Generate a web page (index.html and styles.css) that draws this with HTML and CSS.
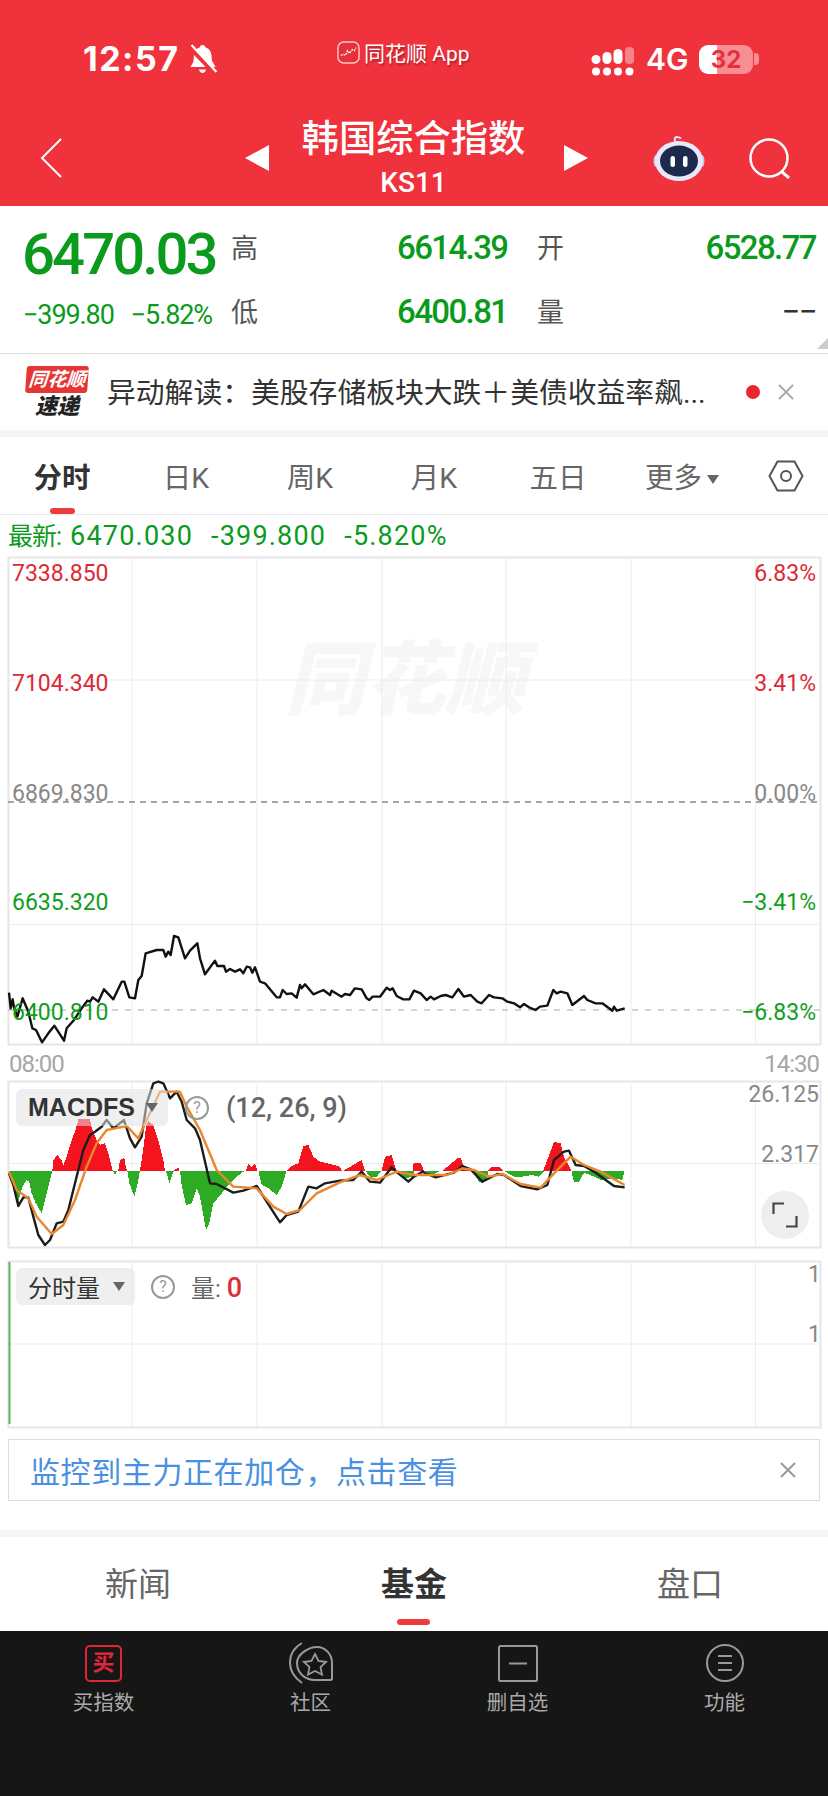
FILE: index.html
```html
<!DOCTYPE html>
<html lang="zh-CN">
<head>
    <meta charset="UTF-8">
    <meta name="viewport" content="width=device-width, initial-scale=1.0">
    <title>韩国综合指数</title>
    <link rel="stylesheet" href="styles.css">
</head>
<body>
    <header class="header">
        <div class="status">
            <span class="clock">12:57</span>
            <svg class="bell" viewBox="0 0 29 30">
                <path d="M14 1c1.8 0 2.8 1.2 3 2.6 3.8 1 5.8 4 6 8l.4 5 3.600 6.400H2l3-5.400.4-6c.2-4 2.400-7 5.800-8C11.400 2.200 12.400 1 14 1z" fill="#fff"/>
                <path d="M10.500 25.500h7c-.5 2-1.800 3.500-3.500 3.500s-3-1.500-3.500-3.500z" fill="#fff"/>
                <path d="M1 3l25 26" stroke="#f0323c" stroke-width="4.500"/>
                <path d="M3 1l25 27" stroke="#fff" stroke-width="2.200"/>
            </svg>
            <span class="app-tag">
                <svg class="app-logo" viewBox="0 0 24 24">
                    <rect x="1" y="1" width="22" height="22" rx="6" fill="#e8303a" stroke="#ffc9cc" stroke-width="1.500"/>
                    <path d="M4 15l3-1 2 1 2-5 2 3 3-4 2 1 2-3" fill="none" stroke="#fff" stroke-width="1.300" stroke-dasharray="2 1"/>
                </svg>
                同花顺 App
            </span>
            <svg class="signal" viewBox="0 0 44 30">
                <rect x="0.500" y="8" width="9" height="9" rx="4.500" fill="#fff"/>
                <rect x="11.500" y="5" width="9" height="12" rx="4.500" fill="#fff"/>
                <rect x="22.500" y="2" width="9" height="15" rx="4.500" fill="#fff"/>
                <rect x="34" y="0" width="9" height="17" rx="4" fill="#fff" opacity=".4"/>
                <circle cx="5" cy="24.500" r="4" fill="#fff"/>
                <circle cx="16" cy="24.500" r="4" fill="#fff"/>
                <circle cx="27" cy="24.500" r="4" fill="#fff"/>
                <circle cx="38.500" cy="24.500" r="4" fill="#fff"/>
            </svg>
            <span class="net">4G</span>
            <span class="battery">32</span>
            <span class="battery-nub"></span>
        </div>
        <nav class="nav">
            <svg class="nav-back" viewBox="0 0 22 40"><path d="M21 1L2 20l19 19" fill="none" stroke="#fff" stroke-width="2"/></svg>
            <span class="tri tri-left"></span>
            <div class="nav-title">
                <div class="nav-name">韩国综合指数</div>
                <div class="nav-code">KS11</div>
            </div>
            <span class="tri tri-right"></span>
            <svg class="robot" viewBox="0 0 52 46">
                <path d="M25 8c-3-1-4-3-3-5 1-1.500 4-1 6 .5" fill="none" stroke="#e9e6fb" stroke-width="2"/>
                <ellipse cx="3" cy="26" rx="2.500" ry="6" fill="#c9c6f2"/>
                <ellipse cx="49" cy="26" rx="2.500" ry="6" fill="#c9c6f2"/>
                <ellipse cx="26" cy="26" rx="24" ry="20" fill="#e9e8fb"/>
                <ellipse cx="26" cy="26" rx="19" ry="15.500" fill="#1d2a4d"/>
                <rect x="17.500" y="21" width="4.500" height="11" rx="2.200" fill="#fff"/>
                <rect x="30" y="21" width="4.500" height="11" rx="2.200" fill="#fff"/>
            </svg>
            <svg class="search" viewBox="0 0 42 41">
                <circle cx="20" cy="20" r="18.500" fill="none" stroke="#fff" stroke-width="2.500"/>
                <path d="M32 33l8 7" stroke="#fff" stroke-width="3"/>
            </svg>
        </nav>
    </header>

    <section class="quote">
        <div class="price">6470.03</div>
        <div class="quote-label">高</div>
        <div class="quote-value">6614.39</div>
        <div class="quote-label">开</div>
        <div class="quote-value quote-right">6528.77</div>
        <div class="change"><span>−399.80</span><span>−5.82%</span></div>
        <div class="quote-label">低</div>
        <div class="quote-value">6400.81</div>
        <div class="quote-label">量</div>
        <div class="quote-value quote-right quote-empty">−−</div>
        <span class="quote-corner"></span>
    </section>

    <section class="ticker">
        <div class="ticker-logo">
            <div class="ticker-flag">同花顺</div>
            <div class="ticker-sub">速递</div>
        </div>
        <div class="ticker-text">异动解读&#xFF1A;美股存储板块大跌&#xFF0B;美债收益率飙...</div>
        <span class="ticker-dot"></span>
        <svg class="close close-ticker" viewBox="0 0 18 16"><path d="M2 1l14 14M16 1L2 15" stroke="#aaa" stroke-width="2"/></svg>
    </section>

    <section class="periods">
        <div class="period period-active">分时</div>
        <div class="period">日K</div>
        <div class="period">周K</div>
        <div class="period">月K</div>
        <div class="period">五日</div>
        <div class="period">更多<span class="period-arrow"></span></div>
        <svg class="hex" viewBox="0 0 36 32">
            <path d="M9.500 1.500h17L34.500 16l-8 14.500h-17L1.500 16z" fill="none" stroke="#555" stroke-width="2"/>
            <circle cx="18" cy="16" r="5" fill="none" stroke="#555" stroke-width="2"/>
        </svg>
    </section>

    <div class="latest">
        <span class="latest-label">最新:</span>
        <span>6470.030</span>
        <span>-399.800</span>
        <span>-5.820%</span>
    </div>

    <!-- main chart, viewBox is in page coordinates -->
    <div class="chart chart-main">
        <svg viewBox="0 557 828 489" width="828" height="489">
            <text class="watermark" x="405" y="708" text-anchor="middle">同花顺</text>
            <path class="frame" d="M8.500 557.500h812v487H8.500z"/>
            <path class="grid" d="M132 557v487M257 557v487M382 557v487M506 557v487M631 557v487M755.500 557v487M8 680h812M8 924.500h812"/>
            <path class="mid-line" d="M8 802h812"/>
            <path class="low-line" d="M8 1010h812"/>
            <g transform="translate(0 880) scale(.33333)">
                <polyline class="line line-price" points="27,338 32,385 38,358 42,382 52,410 68,355 85,395 97,445 108,450 126,487 145,460 163,437 192,482 200,445 222,420 245,385 262,362 270,365 278,352 295,365 312,328 340,358 365,305 373,305 388,352 405,355 415,300 425,288 437,220 470,210 490,210 497,230 505,215 512,225 522,168 535,172 555,235 570,212 592,190 600,235 615,283 645,242 652,258 672,258 678,275 690,267 705,275 720,268 730,280 740,260 750,262 757,278 765,262 780,305 795,310 830,352 840,352 848,330 860,342 875,340 890,353 900,315 905,325 915,313 940,343 970,330 990,345 995,332 1025,350 1035,342 1050,345 1065,325 1085,328 1100,355 1108,360 1118,350 1140,350 1160,323 1170,330 1178,325 1190,348 1210,358 1228,358 1242,332 1262,340 1280,360 1292,350 1302,358 1322,348 1337,345 1357,352 1375,327 1392,350 1412,345 1432,365 1445,370 1467,345 1482,352 1507,355 1522,365 1542,370 1560,382 1572,372 1587,382 1607,390 1620,380 1642,377 1660,330 1670,340 1682,335 1702,340 1717,375 1752,348 1762,360 1787,370 1807,370 1837,392 1842,380 1850,392 1874,385"/>
            </g>
            <text class="axis axis-up" x="12" y="581">7338.850</text>
            <text class="axis axis-up" x="12" y="691">7104.340</text>
            <text class="axis axis-flat" x="12" y="801">6869.830</text>
            <text class="axis axis-down" x="12" y="910">6635.320</text>
            <text class="axis axis-down" x="12" y="1020">6400.810</text>
            <text class="axis axis-up" x="816" y="581" text-anchor="end">6.83%</text>
            <text class="axis axis-up" x="816" y="691" text-anchor="end">3.41%</text>
            <text class="axis axis-flat" x="816" y="801" text-anchor="end">0.00%</text>
            <text class="axis axis-down" x="816" y="910" text-anchor="end">−3.41%</text>
            <text class="axis axis-down" x="816" y="1020" text-anchor="end">−6.83%</text>
        </svg>
    </div>

    <div class="time-axis">
        <span>08:00</span>
        <span>14:30</span>
    </div>

    <!-- macd -->
    <div class="chart chart-macd">
        <svg viewBox="0 1081 828 167" width="828" height="167">
            <path class="frame" d="M8.500 1081.500h812v166H8.500z"/>
            <path class="grid" d="M132 1081v166M257 1081v166M382 1081v166M506 1081v166M631 1081v166M755.500 1081v166M8 1163.500h812"/>
            <g transform="translate(0 1060) scale(.33333)">
                <path class="bars bars-down" d="M27 332L30 350 40 385 48 420 55 442 60 400 70 375 80 360 88 365 95 400 105 425 125 460 135 420 145 380 157 332zM338 332l7 13 7-13zM382 332l6 38 15 40 9-35 8-43zM498 332l10 38 10-30 4-8zM540 332l5 43 13 60 17-5 15-45 10 25 18 100 10-20 12-60 25-30 25-30 20-20 25-18zM775 332l10 43 20 10 25 20 15-25 15-48zM1095 332l15 18h20l15-18zM1195 332l20 23 27-5v-18zM1272 332l25 13 25-13zM1417 332l20 33 10 5 17-20v-18zM1510 332l32 18 25 0 30-5 20 5 16-18zM1714 332l8 33 15 0 15-27 30 12 20 10 40-5 25 5 7-28z"/>
                <path class="bars bars-up" d="M157 332l3-32 12-15 13 15 5 15 10-25 12-40 16-45 7-27h35l5 27 15 35 10 15 15-5 10 30 10 40 3 12zM355 332l5-32 13-7 5 32 4 7zM420 332l8-52 10-80 7-17 15 12 15 45 15 60 5 32zM520 332l15-10 3 10zM738 332l7-20 10 8 10-8 7 20zM862 332l13-14 20-8 15-52 15-3 15 35 20 15 30 7 30 8 5 12zM1030 332l30-17 25-15 10 32zM1145 332l10-42 20-5 10 35 5 12zM1240 332v-20l2-2h20l10 22zM1327 332l15-12 30-25h10l10 25 25 12zM1464 332l13-12h20l13 12zM1630 332l27-72 5-15 20 5 10 40 22 42z"/>
                <polyline class="line line-diff" points="27,340 40,375 55,438 70,412 85,412 100,470 115,525 135,555 150,540 170,490 190,485 205,450 225,370 250,270 270,225 285,215 305,200 320,180 340,205 372,180 390,235 405,262 425,230 440,130 460,70 475,65 490,70 510,115 530,95 545,125 560,180 585,205 600,240 630,370 650,372 700,398 730,392 770,378 800,425 840,487 860,465 895,455 925,380 950,385 975,370 1020,362 1060,360 1085,335 1110,365 1140,368 1175,322 1195,340 1225,365 1242,350 1267,335 1307,352 1362,338 1387,318 1412,328 1447,365 1492,342 1512,345 1562,378 1612,388 1642,375 1662,300 1692,275 1707,272 1727,315 1752,318 1787,338 1842,378 1874,382"/>
                <polyline class="line line-dea" points="27,335 50,390 85,415 110,470 155,522 190,495 225,420 260,320 290,250 320,210 345,205 380,198 415,235 440,180 480,95 510,95 540,95 560,140 600,210 650,330 700,380 770,385 820,440 860,462 900,450 950,400 1020,367 1080,345 1130,360 1190,335 1242,345 1282,345 1342,345 1387,325 1422,330 1467,350 1507,342 1562,372 1622,383 1662,340 1712,290 1752,315 1802,335 1874,375"/>
            </g>
            <text class="axis axis-gray" x="819" y="1102" text-anchor="end">26.125</text>
            <text class="axis axis-gray" x="819" y="1162" text-anchor="end">2.317</text>
        </svg>
        <div class="indicator indicator-macd">
            <div class="indicator-pill">MACDFS<span class="pill-arrow"></span></div>
            <span class="help">?</span>
            <span class="indicator-args">(12, 26, 9)</span>
        </div>
        <div class="fullscreen">
            <svg viewBox="0 0 26 26" width="26" height="26"><path d="M1.500 12V1.500H12M24.500 14v10.500H14" fill="none" stroke="#444" stroke-width="2.200"/></svg>
        </div>
    </div>

    <!-- volume -->
    <div class="chart chart-volume">
        <svg viewBox="0 1261 828 167" width="828" height="167">
            <path class="frame" d="M8.500 1261.500h812v166H8.500z"/>
            <path class="grid" d="M132 1261v166M257 1261v166M382 1261v166M506 1261v166M631 1261v166M755.500 1261v166M8 1344h812"/>
            <path class="vol-bar" d="M9.500 1262v162"/>
            <text class="axis axis-gray" x="821" y="1282" text-anchor="end">1</text>
            <text class="axis axis-gray" x="821" y="1342" text-anchor="end">1</text>
        </svg>
        <div class="indicator indicator-volume">
            <div class="indicator-pill pill-volume">分时量<span class="pill-arrow"></span></div>
            <span class="help">?</span>
            <span class="indicator-args">量: <b class="vol-zero">0</b></span>
        </div>
    </div>

    <div class="notice">
        <span class="notice-text">监控到主力正在加仓&#xFF0C;点击查看</span>
        <svg class="close close-notice" viewBox="0 0 16 16"><path d="M1 1l14 14M15 1L1 15" stroke="#999" stroke-width="2"/></svg>
    </div>

    <section class="lower-tabs">
        <div class="lower-tab">新闻</div>
        <div class="lower-tab lower-tab-active">基金</div>
        <div class="lower-tab">盘口</div>
    </section>

    <footer class="toolbar">
        <div class="tool">
            <div class="tool-icon"><span class="buy-icon">买</span></div>
            <div class="tool-label">买指数</div>
        </div>
        <div class="tool">
            <div class="tool-icon">
                <svg viewBox="0 0 44 42" width="44" height="42" fill="none" stroke="#999" stroke-width="2">
                    <path d="M13 1C6 5 1 12 1 21s5 15 12 20" />
                    <path d="M43 37V21c0-9-7-16-15-16S8 12 8 21c0 10 8 17 18 17h14c2 0 3-.5 3-1z"/>
                    <path d="M26 12l3.500 7 7.500 1-5.500 5 1.500 7.500-7-3.500-7 3.500 1.500-7.500-5.500-5 7.500-1z" stroke-width="1.800"/>
                </svg>
            </div>
            <div class="tool-label">社区</div>
        </div>
        <div class="tool">
            <div class="tool-icon">
                <svg viewBox="0 0 40 37" width="40" height="37" fill="none" stroke="#999" stroke-width="2">
                    <rect x="1" y="1" width="38" height="35" rx="1.500"/>
                    <path d="M11 18.500h18"/>
                </svg>
            </div>
            <div class="tool-label">删自选</div>
        </div>
        <div class="tool">
            <div class="tool-icon">
                <svg viewBox="0 0 38 38" width="38" height="38" fill="none" stroke="#999" stroke-width="2">
                    <circle cx="19" cy="19" r="18"/>
                    <path d="M12 12h14M12 19h14M12 26h14"/>
                </svg>
            </div>
            <div class="tool-label">功能</div>
        </div>
    </footer>
</body>
</html>
```

FILE: styles.css
```css
* {
    box-sizing: border-box;
}
body {
    margin: 0;
    width: 828px;
    height: 1796px;
    overflow: hidden;
    background-color: #fff;
    font-family: Roboto, "Noto Sans CJK SC", sans-serif;
    color: #333;
}

/* red header */
.header {
    height: 206px;
    padding-top: 41px;
    background-color: #f0323c;
    color: #fff;
}
.status {
    display: flex;
    align-items: center;
    height: 36px;
    padding-left: 83px;
}
.clock {
    width: 99px;
    font-family: Inter, sans-serif;
    font-size: 34px;
    font-weight: 700;
    line-height: 36px;
    letter-spacing: 1.5px;
}
.bell {
    width: 30px;
    height: 30px;
    margin-left: 6px;
}
.app-tag {
    display: flex;
    align-items: center;
    gap: 4px;
    margin-left: 119px;
    width: 255px;
    font-size: 21px;
    margin-top: -14px;
    text-shadow: 1px 2px 2px rgba(0, 0, 0, 0.3);
}
.app-logo {
    width: 23px;
    height: 23px;
}
.signal {
    width: 44px;
    height: 30px;
    margin-top: 6px;
    margin-left: -1px;
}
.net {
    margin-left: 11px;
    width: 53px;
    font-family: Inter, sans-serif;
    font-size: 30px;
    font-weight: 600;
}
.battery {
    width: 54px;
    height: 29px;
    border-radius: 9px;
    background: linear-gradient(90deg, #fff 34%, rgba(255, 255, 255, 0.45) 34%);
    color: #e8303c;
    font-family: Inter, sans-serif;
    font-size: 24px;
    font-weight: 700;
    line-height: 29px;
    text-align: center;
}
.battery-nub {
    width: 5px;
    height: 12px;
    margin-left: 1px;
    border-radius: 0 4px 4px 0;
    background-color: rgba(255, 255, 255, 0.45);
}
.nav {
    display: flex;
    align-items: flex-start;
    height: 74px;
    margin-top: 44px;
    padding-left: 40px;
}
.nav-back {
    width: 22px;
    height: 40px;
    margin-top: 17px;
}
.tri {
    width: 0;
    height: 0;
    margin-top: 24px;
    border-top: 13.5px solid transparent;
    border-bottom: 13.5px solid transparent;
}
.tri-left {
    margin-left: 183px;
    border-right: 24px solid #fff;
}
.tri-right {
    border-left: 24px solid #fff;
}
.nav-title {
    width: 295px;
    padding-right: 6px;
    text-align: center;
}
.nav-name {
    font-size: 37.3px;
    font-weight: 500;
    line-height: 36px;
}
.nav-code {
    margin-top: 12px;
    font-size: 28px;
    font-weight: 500;
    line-height: 28px;
}
.robot {
    width: 52px;
    height: 46px;
    margin-top: 14px;
    margin-left: 65px;
}
.search {
    width: 42px;
    height: 41px;
    margin-top: 17px;
    margin-left: 44px;
}

/* quote block */
.quote {
    position: relative;
    display: grid;
    grid-template-columns: 209px 166px 140px 1fr auto;
    grid-template-rows: 64px 64px;
    align-items: center;
    height: 148px;
    padding: 9px 12px 0 22px;
    border-bottom: 1px solid #ddd;
}
.price {
    margin-top: 14px;
    font-size: 58px;
    font-weight: 500;
    line-height: 58px;
    letter-spacing: -2.9px;
    color: #0a9a1c;
}
.change {
    display: flex;
    gap: 17px;
    margin-top: 8px;
    padding-left: 1px;
    font-size: 27px;
    letter-spacing: -1.1px;
    color: #0a9a1c;
}
.quote-label {
    margin-top: 3px;
    font-size: 27px;
    line-height: 32px;
    color: #555;
}
.quote-value {
    font-size: 33px;
    font-weight: 500;
    letter-spacing: -1.6px;
    color: #0a9a1c;
}
.quote-right {
    text-align: right;
}
.quote-empty {
    font-weight: 400;
    color: #333;
}
.quote-corner {
    position: absolute;
    right: 0;
    bottom: 4px;
    width: 0;
    height: 0;
    border-left: 11px solid transparent;
    border-bottom: 11px solid #ccc;
}

/* news ticker */
.ticker {
    display: flex;
    align-items: center;
    height: 76px;
    padding-left: 26px;
}
.ticker-logo {
    width: 62px;
    height: 52px;
}
.ticker-flag {
    height: 27px;
    border-radius: 3px;
    background-color: #e53535;
    color: #fff;
    font-size: 19px;
    font-weight: 700;
    font-style: italic;
    line-height: 27px;
    text-align: center;
    transform: skewX(-4deg);
}
.ticker-sub {
    margin-top: 2px;
    font-size: 22px;
    font-weight: 900;
    font-style: italic;
    line-height: 23px;
    text-align: center;
    color: #222;
}
.ticker-text {
    width: 639px;
    margin-left: 19px;
    margin-top: -4px;
    font-size: 28.8px;
    white-space: nowrap;
    color: #333;
}
.ticker-dot {
    width: 14px;
    height: 14px;
    border-radius: 50%;
    background-color: #e8262f;
}
.close {
    display: block;
}
.close-ticker {
    width: 18px;
    height: 16px;
    margin-left: 17px;
}

/* period tabs */
.periods {
    display: grid;
    grid-template-columns: repeat(6, 124px) 1fr;
    align-items: center;
    height: 85px;
    border-top: 7px solid #f5f5f5;
    border-bottom: 1px solid #e8e8e8;
}
.period {
    position: relative;
    font-size: 28.5px;
    text-align: center;
    color: #666;
}
.period-active {
    font-weight: 700;
    color: #333;
}
.period-active::after {
    content: "";
    position: absolute;
    left: 50px;
    bottom: -18px;
    width: 25px;
    height: 6px;
    border-radius: 3px;
    background-color: #ee3b3b;
}
.period-arrow {
    display: inline-block;
    margin-left: 5px;
    margin-bottom: 4px;
    border-top: 9px solid #666;
    border-left: 6.5px solid transparent;
    border-right: 6.5px solid transparent;
}
.hex {
    width: 36px;
    height: 32px;
    margin-left: 24px;
}

/* latest line */
.latest {
    display: flex;
    align-items: baseline;
    gap: 18px;
    height: 42px;
    padding-left: 8px;
    font-size: 27px;
    line-height: 42px;
    letter-spacing: 1.2px;
    color: #0a9a1c;
}
.latest-label {
    margin-right: -9px;
    letter-spacing: -1px;
    font-size: 25px;
}

/* charts */
.chart {
    position: relative;
    height: 167px;
}
.chart svg {
    display: block;
    overflow: visible;
}
.chart-main {
    height: 489px;
}
.chart-volume {
    margin-top: 13px;
}
.frame {
    fill: none;
    stroke: #e6e6e6;
    stroke-width: 2;
}
.grid {
    fill: none;
    stroke: #ececec;
    stroke-width: 1;
}
.mid-line {
    stroke: #888;
    stroke-width: 1.5;
    stroke-dasharray: 6 5;
}
.low-line {
    stroke: #c9c6bb;
    stroke-width: 1.5;
    stroke-dasharray: 6 7;
}
.line {
    fill: none;
    stroke-linejoin: round;
    vector-effect: non-scaling-stroke;
}
.line-price {
    stroke: #111;
    stroke-width: 2.4;
}
.line-diff {
    stroke: #1c1c1c;
    stroke-width: 2.4;
}
.line-dea {
    stroke: #e8872e;
    stroke-width: 2.4;
}
.bars {
    shape-rendering: crispEdges;
}
.bars-up {
    fill: #f4141e;
}
.bars-down {
    fill: #2dab24;
}
.axis {
    font-family: Roboto, sans-serif;
    font-size: 23px;
}
.axis-up {
    fill: #dc2a35;
}
.axis-down {
    fill: #0f9e20;
}
.axis-flat {
    fill: #888;
}
.axis-gray {
    fill: #888;
}
.watermark {
    fill: #f7f7f7;
    font-family: "Noto Sans CJK SC", sans-serif;
    font-size: 80px;
    font-weight: 900;
    font-style: italic;
}
.vol-bar {
    stroke: #5cb85c;
    stroke-width: 2;
}
.time-axis {
    display: flex;
    justify-content: space-between;
    align-items: center;
    height: 35px;
    padding: 0 9px;
    font-size: 24px;
    letter-spacing: -1px;
    color: #a6a6a6;
}
.indicator {
    position: absolute;
    left: 16px;
    top: 8px;
    display: flex;
    align-items: center;
    height: 37px;
    font-size: 27px;
    font-weight: 500;
    color: #666;
}
.indicator-volume {
    top: 7px;
}
.indicator-pill {
    display: flex;
    align-items: center;
    justify-content: space-between;
    width: 152px;
    height: 37px;
    padding: 0 10px 0 12px;
    border-radius: 6px;
    background-color: rgba(225, 225, 225, 0.55);
    font-family: "Liberation Sans", sans-serif;
    font-size: 25px;
    font-weight: 700;
    color: #333;
}
.pill-volume {
    width: 119px;
    font-family: "Noto Sans CJK SC", sans-serif;
    font-size: 24px;
    font-weight: 400;
}
.pill-arrow {
    width: 0;
    height: 0;
    border-top: 9px solid #666;
    border-left: 6.5px solid transparent;
    border-right: 6.5px solid transparent;
}
.help {
    width: 24px;
    height: 24px;
    margin-left: 17px;
    border: 2px solid #999;
    border-radius: 50%;
    font-size: 16px;
    font-weight: 400;
    line-height: 20px;
    text-align: center;
    color: #999;
}
.indicator-args {
    margin-left: 17px;
}
.indicator-volume .help {
    margin-left: 16px;
}
.indicator-volume .indicator-args {
    margin-left: 16px;
    font-size: 24px;
    font-weight: 400;
}
.vol-zero {
    color: #d8303a;
    font-size: 27px;
    font-weight: 500;
}
.fullscreen {
    position: absolute;
    left: 761px;
    top: 110px;
    display: flex;
    align-items: center;
    justify-content: center;
    width: 48px;
    height: 48px;
    border-radius: 50%;
    background-color: #eee;
}

/* monitor banner */
.notice {
    display: flex;
    align-items: center;
    justify-content: space-between;
    height: 62px;
    margin: 11px 8px 0;
    padding: 0 23px 0 21px;
    border: 1px solid #ddd;
}
.notice-text {
    font-size: 30px;
    letter-spacing: 0.6px;
    color: #4a90e2;
}
.close-notice {
    width: 16px;
    height: 16px;
}

/* lower tabs */
.lower-tabs {
    display: grid;
    grid-template-columns: repeat(3, 276px);
    height: 101px;
    margin-top: 29px;
    border-top: 7px solid #f5f5f5;
}
.lower-tab {
    position: relative;
    padding-top: 24px;
    font-size: 33px;
    line-height: 48px;
    text-align: center;
    color: #666;
}
.lower-tab-active {
    font-weight: 700;
    color: #333;
}
.lower-tab-active::after {
    content: "";
    position: absolute;
    left: 121px;
    bottom: 6px;
    width: 33px;
    height: 6px;
    border-radius: 3px;
    background-color: #ee3b3b;
}

/* bottom toolbar */
.toolbar {
    display: grid;
    grid-template-columns: repeat(4, 207px);
    height: 165px;
    padding-top: 11px;
    background-color: #161616;
}
.tool {
    text-align: center;
}
.tool-icon {
    display: flex;
    align-items: center;
    justify-content: center;
    height: 42px;
}
.buy-icon {
    width: 37px;
    height: 37px;
    border: 2px solid #e0263c;
    border-radius: 5px;
    font-size: 22px;
    font-weight: 700;
    line-height: 32px;
    color: #e0263c;
}
.tool-label {
    margin-top: 4px;
    font-size: 20.5px;
    line-height: 30px;
    color: #aaa;
}
```
